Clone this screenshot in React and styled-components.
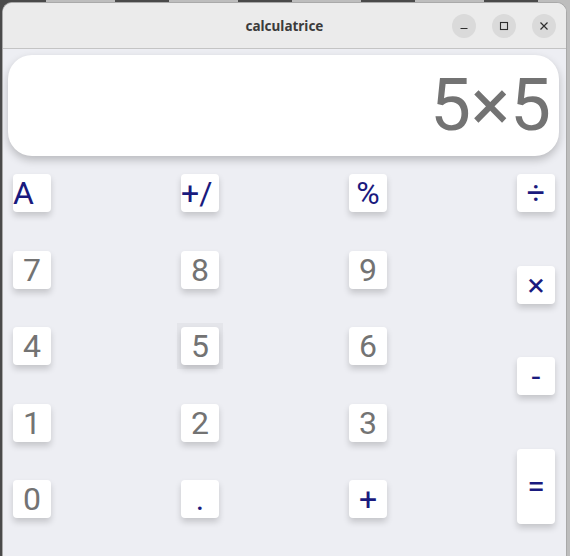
import React from "react";
import styled, { createGlobalStyle } from "styled-components";

const GlobalStyle = createGlobalStyle`
  html, body {
    margin: 0;
    padding: 0;
    height: 100%;
    overflow: hidden;
  }
  body {
    background: repeating-linear-gradient(
      90deg,
      #4a4a4a 0px,
      #4a4a4a 46px,
      #bdbdbd 46px,
      #bdbdbd 115px,
      #4a4a4a 115px,
      #4a4a4a 123px
    );
    font-family: Roboto, "Noto Sans", sans-serif;
  }
`;

const Window = styled.div`
  margin: 2px 0 0 2px;
  width: 563px;
  height: 560px;
  border: 1px solid #a9a9a9;
  border-bottom: none;
  border-radius: 10px 10px 0 0;
  overflow: hidden;
  display: flex;
  flex-direction: column;
  background: #edeef3;
`;

const TitleBar = styled.div`
  position: relative;
  height: 45px;
  flex-shrink: 0;
  background: #ebebeb;
  border-bottom: 1px solid #c4c4c4;
  display: flex;
  align-items: center;
  justify-content: flex-end;
  padding-right: 10px;
  gap: 16px;
`;

const Title = styled.div`
  position: absolute;
  left: 0;
  right: 0;
  top: 0;
  bottom: 0;
  display: flex;
  align-items: center;
  justify-content: center;
  font-family: "Noto Sans", "DejaVu Sans", sans-serif;
  font-weight: 700;
  font-size: 13.5px;
  color: #3b3b3b;
  pointer-events: none;
`;

const WinButton = styled.button`
  position: relative;
  width: 24px;
  height: 24px;
  border-radius: 50%;
  border: none;
  padding: 0;
  background: #dadada;
  display: flex;
  align-items: center;
  justify-content: center;
  color: #2e2e2e;
`;

const Content = styled.div`
  flex: 1;
  padding: 6px 5px 0 5px;
  display: flex;
  flex-direction: column;
`;

const Display = styled.div`
  height: 101px;
  width: 551px;
  background: #fff;
  border-radius: 24px;
  box-shadow: 0 4px 8px rgba(0, 0, 0, 0.22);
  display: flex;
  align-items: center;
  justify-content: flex-end;
  padding-right: 8px;
  box-sizing: border-box;
  font-family: Roboto, sans-serif;
  font-size: 73px;
  color: #737373;
  line-height: 1;
`;

const Keypad = styled.div`
  margin-top: 18px;
  padding-left: 5px;
  display: flex;
`;

const Grid = styled.div`
  isolation: isolate;
  display: grid;
  grid-template-columns: repeat(3, 168px);
  grid-auto-rows: 38px;
  row-gap: 38.5px;
`;

const OpColumn = styled.div`
  display: flex;
  flex-direction: column;
  gap: 53.7px;
`;

const Key = styled.button`
  position: relative;
  width: 38px;
  height: ${(p) => (p.$tall ? "75px" : "38px")};
  padding: 0;
  border: none;
  border-radius: 4px;
  background: #fff;
  box-shadow: 0 4px 6px rgba(0, 0, 0, 0.17);
  font-family: Roboto, sans-serif;
  font-size: 32px;
  line-height: ${(p) => (p.$tall ? "75px" : "38px")};
  color: ${(p) => (p.$op ? "#1a1a7e" : "#737373")};
  text-align: ${(p) => (p.$left ? "left" : "center")};
  white-space: nowrap;
  overflow: ${(p) => (p.$hover ? "visible" : "hidden")};

  &::before {
    content: "";
    display: ${(p) => (p.$hover ? "block" : "none")};
    position: absolute;
    inset: -4px;
    background: rgba(0, 0, 0, 0.035);
    z-index: -1;
  }
`;

const rows = [
  [
    { t: "A", op: true, left: true },
    { t: "+/", op: true, left: true },
    { t: "%", op: true },
  ],
  [{ t: "7" }, { t: "8" }, { t: "9" }],
  [{ t: "4" }, { t: "5", hover: true }, { t: "6" }],
  [{ t: "1" }, { t: "2" }, { t: "3" }],
  [{ t: "0" }, { t: ".", op: true }, { t: "+", op: true }],
];

const ops = [{ t: "÷" }, { t: "×" }, { t: "-" }, { t: "=", tall: true }];

export default function App() {
  return (
    <>
      <GlobalStyle />
      <Window>
        <TitleBar>
          <Title>calculatrice</Title>
          <WinButton aria-label="minimize">
            <svg width="10" height="10" viewBox="0 0 10 10">
              <path d="M1.5 7.5h7" stroke="currentColor" strokeWidth="1.2" fill="none" />
            </svg>
          </WinButton>
          <WinButton aria-label="maximize">
            <svg width="10" height="10" viewBox="0 0 10 10">
              <rect x="1.5" y="1.5" width="7" height="7" stroke="currentColor" strokeWidth="1.1" fill="none" />
            </svg>
          </WinButton>
          <WinButton aria-label="close">
            <svg width="10" height="10" viewBox="0 0 10 10">
              <path d="M1.5 1.5l7 7M8.5 1.5l-7 7" stroke="currentColor" strokeWidth="1.2" fill="none" />
            </svg>
          </WinButton>
        </TitleBar>
        <Content>
          <Display>5×5</Display>
          <Keypad>
            <Grid>
              {rows.flat().map((k, i) => (
                <Key key={i} $op={k.op} $left={k.left} $hover={k.hover}>
                  {k.t}
                </Key>
              ))}
            </Grid>
            <OpColumn>
              {ops.map((k) => (
                <Key key={k.t} $op $tall={k.tall}>
                  {k.t}
                </Key>
              ))}
            </OpColumn>
          </Keypad>
        </Content>
      </Window>
    </>
  );
}
